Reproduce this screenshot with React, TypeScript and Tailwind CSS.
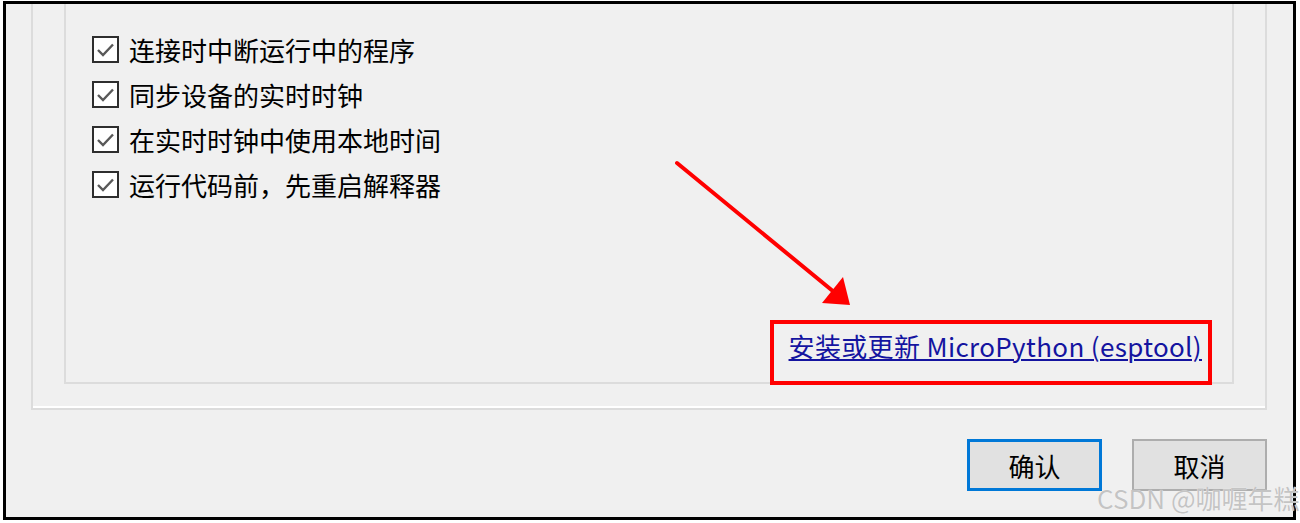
import React from "react";

const options = [
  "连接时中断运行中的程序",
  "同步设备的实时时钟",
  "在实时时钟中使用本地时间",
  "运行代码前，先重启解释器",
];

const cjk = '"Noto Sans CJK SC", "Liberation Sans", sans-serif';

function Checkbox() {
  return (
    <span className="flex h-[27px] w-[27px] shrink-0 items-center justify-center border-2 border-[#2e2e2e] bg-white">
      <svg width="23" height="23" viewBox="0 0 23 23" fill="none">
        <path d="M4 12 L9 17 L19 6.5" stroke="#595959" strokeWidth="2.4" />
      </svg>
    </span>
  );
}

export default function App() {
  return (
    <div
      className="relative h-[523px] w-[1300px] overflow-hidden bg-white pl-[3px] pt-[1px]"
      style={{ fontFamily: cjk }}
    >
      <div className="flex h-[519px] w-[1293px] flex-col border-[3px] border-black bg-[#f0f0f0] pl-[25px] pr-[26px]">
        {/* outer group */}
        <div className="flex h-[406px] flex-col border-x-2 border-b-2 border-[#dcdcdc] pb-[24px] pl-[31px] pr-[31px] shadow-[inset_0_-2px_0_#ffffff]">
          {/* inner group */}
          <div className="flex flex-1 flex-col border-x-2 border-b-2 border-[#dcdcdc] pl-[26px]">
            <div className="flex flex-col gap-[18px] pt-[32px]">
              {options.map((label) => (
                <label key={label} className="flex items-center gap-[10px]">
                  <Checkbox />
                  <span className="text-[26px] leading-[26px] text-black">{label}</span>
                </label>
              ))}
            </div>
            <div className="mt-auto flex justify-end pb-[21px] pr-[30px]">
              <a
                href="#"
                className="text-[26px] leading-[30px] tracking-[0.35px] text-[#1414a0] underline decoration-[2px] underline-offset-[2px]"
              >
                安装或更新 MicroPython (esptool)
              </a>
            </div>
          </div>
        </div>
        {/* buttons */}
        <div className="mt-[29px] flex justify-end gap-[30px]">
          <button className="flex h-[52px] w-[135px] items-center justify-center border-[3px] border-[#0078d7] bg-[#e1e1e1] text-[26px] text-black">
            确认
          </button>
          <button className="flex h-[52px] w-[135px] items-center justify-center border-2 border-[#adadad] bg-[#e1e1e1] text-[26px] text-black">
            取消
          </button>
        </div>
      </div>

      {/* annotation: red box */}
      <div className="absolute left-[770px] top-[320px] h-[65px] w-[442px] border-4 border-[#ff0000]" />

      {/* annotation: arrow */}
      <svg className="absolute left-0 top-0" width="1300" height="523" viewBox="0 0 1300 523">
        <line x1="677" y1="163" x2="834" y2="292" stroke="#ff0000" strokeWidth="4" strokeLinecap="round" />
        <polygon points="850,305 822,303 843,277" fill="#ff0000" />
      </svg>

      {/* watermark */}
      <div className="absolute left-[1097px] top-[482px] whitespace-nowrap text-[26px] leading-[32px] text-[#c4c4c4] [text-shadow:0_0_1px_#ffffff]">
        CSDN @咖喱年糕
      </div>
    </div>
  );
}
